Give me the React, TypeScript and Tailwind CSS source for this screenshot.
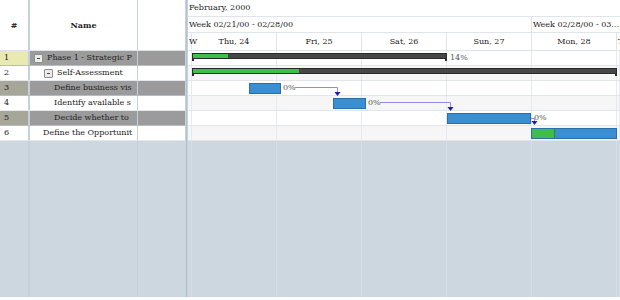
import React from "react";

type Row = {
  num: string;
  name: string;
  indent: number;
  expander: boolean;
  sel: boolean;
};

const rows: Row[] = [
  { num: "1", name: "Phase 1 - Strategic P", indent: 4, expander: true, sel: true },
  { num: "2", name: "Self-Assessment", indent: 14, expander: true, sel: false },
  { num: "3", name: "Define business vis", indent: 24, expander: false, sel: true },
  { num: "4", name: "Identify available s", indent: 24, expander: false, sel: false },
  { num: "5", name: "Decide whether to", indent: 24, expander: false, sel: true },
  { num: "6", name: "Define the Opportunit", indent: 13, expander: false, sel: false },
];

const dayCells = [
  { w: "w-[4px]", label: "W", left: true },
  { w: "w-[85px]", label: "Thu, 24", left: false },
  { w: "w-[85px]", label: "Fri, 25", left: false },
  { w: "w-[85px]", label: "Sat, 26", left: false },
  { w: "w-[85px]", label: "Sun, 27", left: false },
  { w: "w-[85px]", label: "Mon, 28", left: false },
  { w: "flex-1", label: "T", left: true },
];

function GridCells({ line }: { line: string }) {
  return (
    <>
      {dayCells.map((d, i) => (
        <div key={i} className={`${d.w} shrink-0 h-full border-r ${line}`} />
      ))}
    </>
  );
}

function Summary({ left, width, green }: { left: number; width: number; green: number }) {
  return (
    <div
      className="absolute top-[2px] h-[6px] bg-[#474747] border border-[#2a2a2a]"
      style={{ left, width }}
    >
      <div className="h-full bg-[#3cc04a]" style={{ width: green }} />
      <div className="absolute left-[-1px] top-full w-[2px] h-[3px] bg-[#2a2a2a]" />
      <div className="absolute right-[-1px] top-full w-[2px] h-[3px] bg-[#2a2a2a]" />
    </div>
  );
}

function Task({ left, width, green = 0 }: { left: number; width: number; green?: number }) {
  return (
    <div
      className="absolute top-[2px] h-[11px] bg-[#3a8fd2] border border-[#2b6fa6] flex"
      style={{ left, width }}
    >
      {green > 0 && <div className="h-full bg-[#3fbd4b] border-r border-[#2b8a35]" style={{ width: green }} />}
    </div>
  );
}

function Pct({ left, text }: { left: number; text: string }) {
  return (
    <div className="absolute top-0 h-full flex items-center text-[#555] whitespace-nowrap" style={{ left }}>
      {text}
    </div>
  );
}

export default function App() {
  const leftLine = "border-[#c3d1de]";
  const gridLine = "border-[#e6e9ed]";
  return (
    <div className="w-[620px] h-[297px] flex overflow-hidden bg-[#cdd7e0] text-[8px] leading-none text-[#222] font-['DejaVu_Serif',serif]">
      {/* Left grid */}
      <div className="w-[185px] shrink-0 flex flex-col">
        <div className="h-[51px] flex bg-white border-b border-[#dde3ea]">
          <div className={`w-[30px] border-r-2 ${leftLine} flex items-center justify-center font-bold`}>#</div>
          <div className={`w-[108px] border-r ${leftLine} flex items-center justify-center font-bold`}>Name</div>
          <div className="flex-1" />
        </div>
        {rows.map((r, i) => (
          <div
            key={i}
            className={`h-[15px] flex border-b ${r.sel ? "border-[#b8bcc0]" : "border-[#e4e8ec]"} ${
              r.sel ? "bg-[#9b9b9b]" : "bg-white"
            }`}
          >
            <div
              className={`w-[30px] border-r-2 ${leftLine} flex items-center pl-[4px] ${
                i === 0 ? "bg-[#e9e9b4]" : r.sel ? "bg-[#a6a699]" : "bg-white"
              }`}
            >
              {r.num}
            </div>
            <div className={`w-[108px] border-r ${leftLine} flex items-center pr-[2px]`} style={{ paddingLeft: r.indent }}>
              {r.expander && (
                <div className="w-[9px] h-[9px] shrink-0 mr-[4px] border border-[#8e8e8e] bg-[#ececec] rounded-[1px] flex items-center justify-center">
                  <div className="w-[3px] h-px bg-[#444]" />
                </div>
              )}
              <div className="whitespace-nowrap">{r.name}</div>
            </div>
            <div className="flex-1" />
          </div>
        ))}
        <div className="flex-1 flex">
          <div className={`w-[30px] border-r-2 ${leftLine}`} />
          <div className={`w-[108px] border-r ${leftLine}`} />
          <div className="flex-1" />
        </div>
      </div>

      {/* splitter */}
      <div className="w-[3px] shrink-0 bg-[#b3c2d0] border-x border-[#c6d3df]" />

      {/* Chart */}
      <div className="flex-1 min-w-0 flex flex-col relative overflow-hidden">
        <div className="h-[17px] bg-white border-b border-[#e0e5eb] flex items-center pl-[1px] whitespace-nowrap">
          February, 2000
        </div>
        <div className="h-[16px] bg-white border-b border-[#e0e5eb] flex whitespace-nowrap">
          <div className="w-[344px] shrink-0 border-r border-[#e0e5eb] flex items-center pl-[1px]">
            Week 02/21/00 - 02/28/00
          </div>
          <div className="flex-1 flex items-center pl-[1px]">Week 02/28/00 - 03...</div>
        </div>
        <div className="h-[18px] bg-white border-b border-[#dde3ea] flex whitespace-nowrap">
          {dayCells.map((d, i) => (
            <div
              key={i}
              className={`${d.w} shrink-0 border-r border-[#e0e5eb] flex items-center ${
                d.left ? "justify-start pl-[1px] overflow-visible" : "justify-center"
              }`}
            >
              {d.label}
            </div>
          ))}
        </div>

        {/* body rows */}
        {rows.map((_, i) => (
          <div
            key={i}
            className={`h-[15px] shrink-0 relative flex border-b border-[#e2e6eb] ${
              i % 2 === 1 ? "bg-[#f6f6f6]" : "bg-white"
            }`}
          >
            <GridCells line={gridLine} />
            {i === 0 && (
              <>
                <Summary left={4} width={255} green={35} />
                <Pct left={262} text="14%" />
              </>
            )}
            {i === 1 && <Summary left={4} width={425} green={106} />}
            {i === 2 && (
              <>
                <Task left={61} width={32} />
                <Pct left={95} text="0%" />
              </>
            )}
            {i === 3 && (
              <>
                <Task left={145} width={33} />
                <Pct left={180} text="0%" />
              </>
            )}
            {i === 4 && (
              <>
                <Task left={259} width={84} />
                <Pct left={346} text="0%" />
              </>
            )}
            {i === 5 && <Task left={343} width={86} green={23} />}
          </div>
        ))}
        <div className="flex-1 flex">
          <GridCells line="border-[#d5dde5]" />
        </div>

        {/* dependency arrows */}
        <svg className="absolute left-0 top-[51px] pointer-events-none" width="432" height="100">
          <polyline points="107,36.5 149.5,36.5 149.5,42" fill="none" stroke="#8d8ce0" strokeWidth="1" />
          <polygon points="146.5,41 152.5,41 149.5,45" fill="#1c1ca6" />
          <polyline points="192,51.5 262.5,51.5 262.5,56" fill="none" stroke="#8d8ce0" strokeWidth="1" />
          <polygon points="259.5,56 265.5,56 262.5,60" fill="#1c1ca6" />
          <polyline points="343,67.5 346.5,67.5 346.5,71" fill="none" stroke="#8d8ce0" strokeWidth="1" />
          <polygon points="343.5,70 349.5,70 346.5,74" fill="#1c1ca6" />
        </svg>
      </div>
    </div>
  );
}
